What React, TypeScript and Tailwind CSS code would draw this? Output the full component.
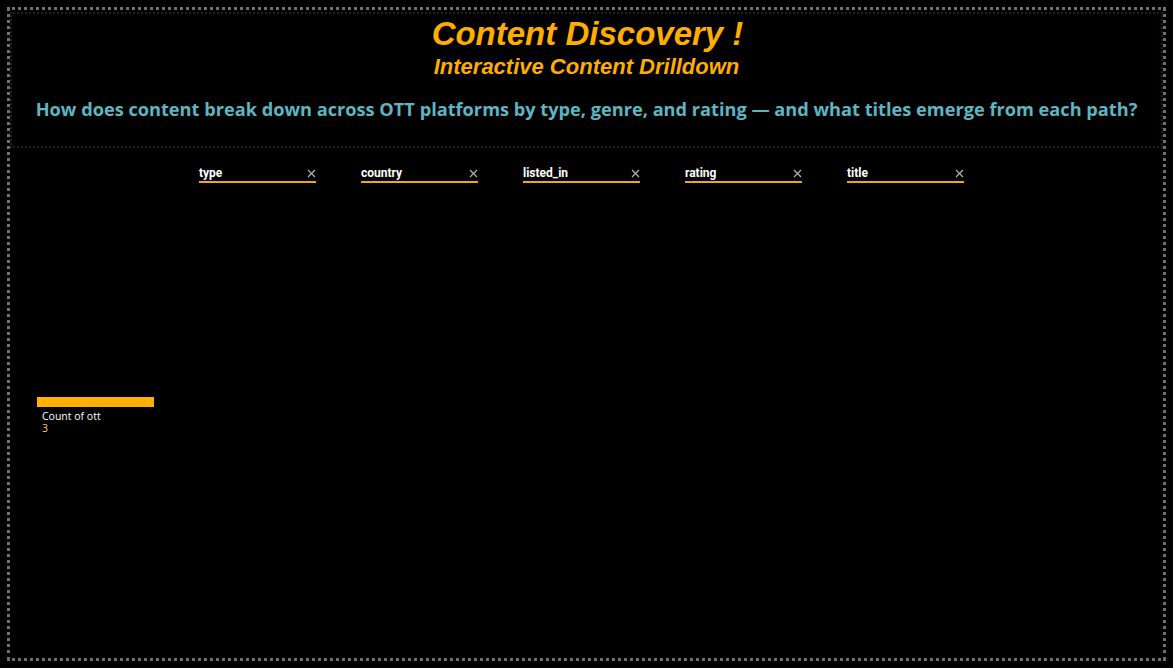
import React from "react";

const slicers = ["type", "country", "listed_in", "rating", "title"];

const Slicer = ({ label }: { label: string }) => (
  <div className="w-[117px] flex items-end justify-between border-b-2 border-[#f2a900] pb-[2px]">
    <span className="text-[12px] leading-none font-bold text-white font-['Roboto',sans-serif]">
      {label}
    </span>
    <svg width="9" height="9" viewBox="0 0 9 9" className="mb-[1px]">
      <path d="M1 1 L8 8 M8 1 L1 8" stroke="#a9b4bf" strokeWidth="1.2" />
    </svg>
  </div>
);

const App = () => {
  return (
    <div className="w-[1173px] h-[668px] bg-black overflow-hidden pt-[7px] px-[7px]">
      <div className="h-[654px] border-[3px] border-dotted border-[#707070] flex flex-col">
        {/* header */}
        <div className="mt-[2px] h-[136px] border-2 border-dotted border-[#0b2a0e] flex flex-col items-center pt-[3px]">
          <h1 className="text-[33px] leading-none font-bold italic text-[#ffad00] font-['Liberation_Sans',Arial,sans-serif] translate-x-[1px]">
            Content Discovery !
          </h1>
          <h2 className="mt-[6px] text-[22px] leading-none font-bold italic text-[#ffad00] font-['Liberation_Sans',Arial,sans-serif]">
            Interactive Content Drilldown
          </h2>
          <p className="mt-[22px] text-[18.2px] leading-none font-bold text-[#5db6c2] font-['Open_Sans',sans-serif]">
            How does content break down across OTT platforms by type, genre, and rating — and what titles emerge from each path?
          </p>
        </div>

        {/* slicers */}
        <div className="mt-[19px] pl-[189px] flex gap-[45px]">
          {slicers.map((s) => (
            <Slicer key={s} label={s} />
          ))}
        </div>

        {/* card */}
        <div className="mt-[214px] ml-[27px] flex flex-col">
          <div className="w-[117px] h-[10px] bg-[#ffb000]" />
          <div className="mt-[3px] ml-[5px] text-[10.5px] leading-[12px] text-white font-['Open_Sans',sans-serif]">
            Count of ott
          </div>
          <div className="ml-[5px] text-[10.5px] leading-[12px] text-[#f8c867] font-['Open_Sans',sans-serif]">
            3
          </div>
        </div>
      </div>
    </div>
  );
};

export default App;
